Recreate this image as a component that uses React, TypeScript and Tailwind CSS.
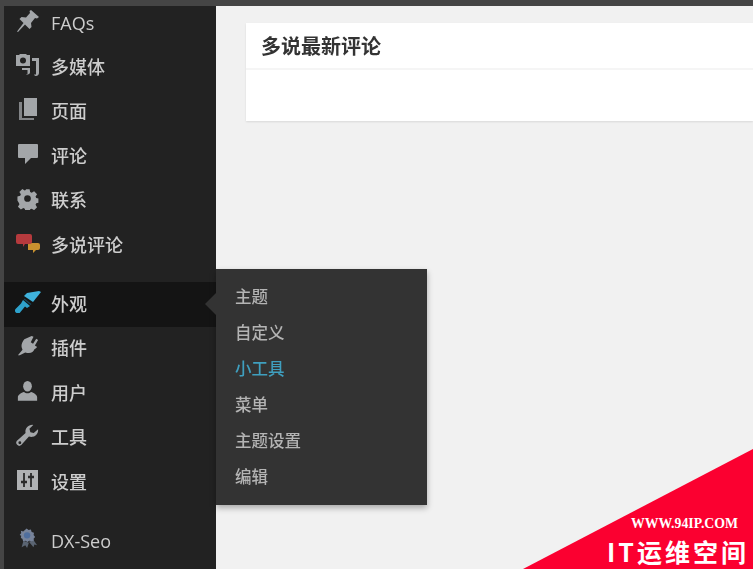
import React from 'react';

const FONT = '[font-family:"Open_Sans","Noto_Sans_CJK_SC",sans-serif]';

const PinIcon = () => (
  <svg width="24" height="24" viewBox="0 0 24 24" fill="#a3a6a9">
    <path d="M15 1l8 7-2 1.500-2-.5-4 5 .5 4-2 2-4.500-4.500L2 23l-1-.5 6.500-8.500-4-4 2-2 4.500.5 4-4.500-.5-2z" />
  </svg>
);

const MediaIcon = () => (
  <svg width="26" height="24" viewBox="0 0 26 24" fill="#a3a6a9">
    <path fillRule="evenodd" d="M1 2h3l1-1h6l1 1h3v11H1zm7 2.500a3 3 0 100 6 3 3 0 000-6z" />
    <path d="M17 5h7v15a3 3 0 01-3.500 3 2.500 2.500 0 01-1.500-1.500h2V8h-4zM7 15h8v4.500a2.500 2.500 0 01-4 1.500h1.500v-4H7z" />
  </svg>
);

const PagesIcon = () => (
  <svg width="20" height="24" viewBox="0 0 20 24" fill="#a3a6a9">
    <path d="M6 1h13v18H6z" />
    <path d="M1 5h3v16h12v2H1z" opacity=".75" />
  </svg>
);

const CommentIcon = () => (
  <svg width="20" height="20" viewBox="0 0 20 20" fill="#a3a6a9">
    <path d="M1 0h18a1 1 0 011 1v12a1 1 0 01-1 1h-6l-6 6v-6H1a1 1 0 01-1-1V1a1 1 0 011-1z" />
  </svg>
);

const GearIcon = () => (
  <svg width="23" height="23" viewBox="0 0 24 24" fill="#a3a6a9">
    <path
      fillRule="evenodd"
      d="M9.500 1h5l.7 3.300 1.800.8 2.900-1.800 3.500 3.500-1.800 2.900.8 1.800 2.600.5v5l-2.600.7-.8 1.800 1.800 2.900-3.500 3.500-2.900-1.800-1.800.8-.7 2.600h-5l-.7-3.300-1.800-.8-2.900 1.800-3.500-3.500 1.800-2.900-.8-1.800L0 14.500v-5l3.300-.7.800-1.800L2.300 4.100l3.500-3.500 2.900 1.800 1.800-.8zM12 8a4 4 0 100 8 4 4 0 000-8z"
      transform="translate(1.500 1.500) scale(.875)"
    />
  </svg>
);

const DuoshuoIcon = () => (
  <svg width="24" height="22" viewBox="0 0 24 22">
    <path d="M12 11h10a2 2 0 012 2v3a2 2 0 01-2 2h-2l-3 3v-3h-5z" fill="#c8912f" />
    <path d="M2 2h12a2 2 0 012 2v6a2 2 0 01-2 2H9l-2 3v-3H2a2 2 0 01-2-2V4a2 2 0 012-2z" fill="#b53a3d" />
  </svg>
);

const BrushIcon = () => (
  <svg width="26" height="22" viewBox="0 0 26 22">
    <path d="M9 5l3-3 12-2 2 1-8 10z" fill="#3fb2dc" />
    <path d="M9.500 7.500l7 5.500-.8 1-7-5.500z" fill="#14465a" />
    <path d="M8 9l7 6-3 2-2-1.500-4.500 5.500a2.800 2.800 0 01-5-3L6 12.500z" fill="#2ea2cc" />
  </svg>
);

const PluginIcon = () => (
  <svg width="22" height="22" viewBox="0 0 24 24" fill="#a3a6a9">
    <path d="M16 1l2 1-3 6 2.500 1.500L21 4l2 1.500-3.500 6L22 13l-2 2-1 .5c-1 3-4 5-8 4l-2-.5-6 3H1l5-6-1-3c-.5-3 1-6 3-8.500z" />
  </svg>
);

const UserIcon = () => (
  <svg width="21" height="22" viewBox="0 0 24 24" fill="#a3a6a9">
    <ellipse cx="12" cy="6.500" rx="5" ry="6" />
    <path d="M1 23v-4c0-3 4-5 7-6 2 2 6 2 8 0 3 1 7 3 7 6v4z" />
  </svg>
);

const WrenchIcon = () => (
  <svg width="23" height="23" viewBox="0 0 24 24" fill="#a3a6a9">
    <path
      fillRule="evenodd"
      d="M23 5.500a7 7 0 01-9.500 7.500L5.500 22a3.200 3.200 0 01-4.500-4.500L10 9.500A7 7 0 0118 1l-4 4 1 3.500 3.500 1zM4 18a1.500 1.500 0 100 3 1.500 1.500 0 000-3z"
    />
  </svg>
);

const SettingsIcon = () => (
  <svg width="21" height="20" viewBox="0 0 21 20">
    <path d="M0 0h21v20H0z" fill="#b0b2b4" />
    <path d="M7 3v14M14 3v14" stroke="#2a2a2a" strokeWidth="1.800" />
    <path d="M4 12h6M11 7h6" stroke="#2a2a2a" strokeWidth="2.500" />
  </svg>
);

const SeoIcon = () => (
  <svg width="20" height="22" viewBox="0 0 22 24">
    <path d="M6 14l-2 7 4-2 2 3 2-6zM12 15l5 6 1-3 3 1-4-6z" fill="#5a6472" />
    <path
      d="M10 1l2.500 2 3-.5 1 3 3 1-.5 3 2 2.500-2 2.500.5 2-3 1-3-.5-2.500 1.500-2.500-1.500-3 .5-1-3-2-1 .5-3L1 9.500 3 7l-.5-3 3 1z"
      fill="#77839a"
      transform="translate(1 -.5) scale(.85)"
    />
    <circle cx="10" cy="8" r="3.500" fill="#4f6e9e" />
  </svg>
);

const topItems = [
  { label: 'FAQs', icon: <PinIcon /> },
  { label: '多媒体', icon: <MediaIcon /> },
  { label: '页面', icon: <PagesIcon /> },
  { label: '评论', icon: <CommentIcon /> },
  { label: '联系', icon: <GearIcon /> },
  { label: '多说评论', icon: <DuoshuoIcon /> },
];

const midItems = [
  { label: '插件', icon: <PluginIcon /> },
  { label: '用户', icon: <UserIcon /> },
  { label: '工具', icon: <WrenchIcon /> },
  { label: '设置', icon: <SettingsIcon /> },
];

const subItems = ['主题', '自定义', '小工具', '菜单', '主题设置', '编辑'];

const MenuRow = ({ label, icon, active }: { label: string; icon: React.ReactNode; active?: boolean }) => (
  <div className={`flex h-[44.4px] items-center ${active ? 'bg-[#141414]' : ''}`}>
    <span className="-mt-[5px] flex w-[47px] shrink-0 justify-center">{icon}</span>
    <span className="text-[18px] font-medium text-[#cdcdcd]">{label}</span>
  </div>
);

const App: React.FC = () => {
  return (
    <div className={`relative h-[569px] w-[753px] overflow-hidden bg-[#f1f1f1] ${FONT}`}>
      <div className="h-[6px] bg-[#454545]" />
      <div className="flex h-[563px]">
        <div className="w-[4px] bg-[#454545]" />
        <aside className="relative w-[212px] shrink-0 bg-[#222222] blur-[0.5px]">
          <div className="-mt-[5px]">
            {topItems.map((item) => (
              <MenuRow key={item.label} {...item} />
            ))}
          </div>
          <div className="mt-[15px]">
            <MenuRow label="外观" icon={<BrushIcon />} active />
            {midItems.map((item) => (
              <MenuRow key={item.label} {...item} />
            ))}
          </div>
          <div className="mt-[15px]">
            <MenuRow label="DX-Seo" icon={<SeoIcon />} />
          </div>
        </aside>
        <main className="flex-1 pl-[30px] pt-[17px] blur-[0.5px]">
          <div className="h-[98px] bg-white shadow-[0_1px_2px_rgba(0,0,0,0.1)]">
            <h2 className="flex h-[47px] items-center border-b-2 border-[#f5f5f5] pl-[15px] pt-[3px] text-[20px] font-bold text-[#333333]">
              多说最新评论
            </h2>
          </div>
        </main>
      </div>

      <div className="absolute left-[216px] top-[269px] h-[236px] w-[211px] bg-[#333333] pl-[19px] pt-[10px] shadow-[0_3px_6px_rgba(0,0,0,0.3)] blur-[0.5px]">
        <div className="absolute -left-[11px] top-[24px] h-0 w-0 border-y-[11px] border-r-[11px] border-y-transparent border-r-[#333333]" />
        {subItems.map((label) => (
          <div
            key={label}
            className={`flex h-[36px] items-center text-[16.500px] font-medium ${label === '小工具' ? 'text-[#3f9fbf]' : 'text-[#b4b4b4]'}`}
          >
            {label}
          </div>
        ))}
      </div>

      <div className="absolute bottom-0 right-0 h-[120px] w-[230px] bg-[#fb0030] [clip-path:polygon(100%_0,100%_100%,0_100%)]" />
      <div className="absolute left-[631px] top-[516px] text-[13.800px] font-bold leading-[16px] text-white [font-family:'Liberation_Serif',serif]">
        WWW.94IP.COM
      </div>
      <div className="absolute left-[607px] top-[533px] whitespace-nowrap text-[25px] font-bold leading-[36px] tracking-[3px] text-white [font-family:'Noto_Sans_CJK_SC',sans-serif]">
        IT运维空间
      </div>
    </div>
  );
};

export default App;
